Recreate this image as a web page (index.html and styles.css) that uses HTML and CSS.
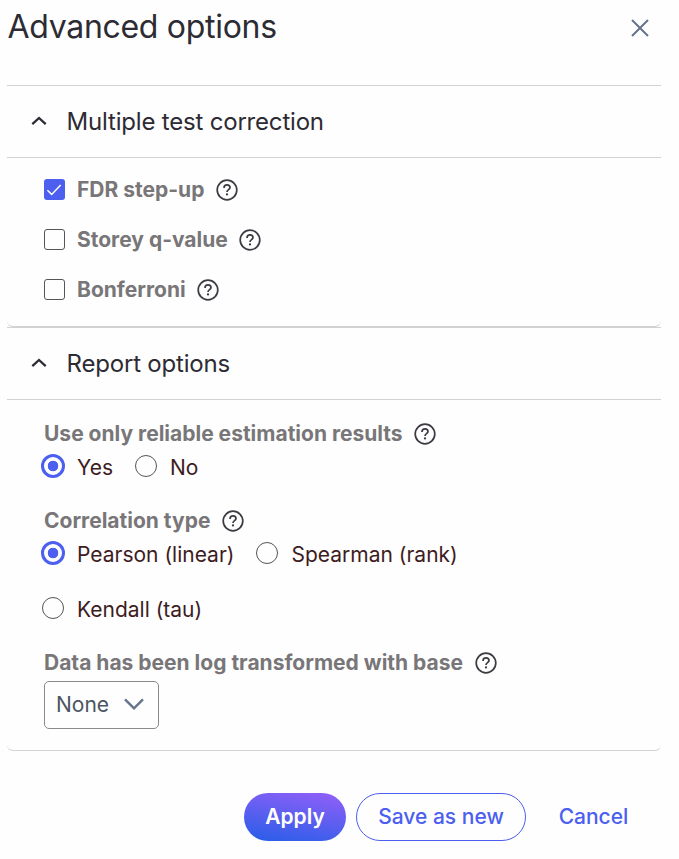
FILE: index.html
```html
<!DOCTYPE html>
<html lang="en">
<head>
  <meta charset="UTF-8" />
  <meta name="viewport" content="width=device-width, initial-scale=1.0" />
  <title>Advanced options</title>
  <link rel="stylesheet" href="styles.css">
</head>
<body>

<!-- shared icons -->
<svg class="sprite" xmlns="http://www.w3.org/2000/svg">
  <symbol id="help" viewBox="0 0 22 22">
    <circle cx="11" cy="11" r="9.8" stroke-width="1.7" />
    <path d="M8 8.9C8 7 9.3 5.9 11 5.9s3 1.1 3 2.7c0 2-3 2.1-3 4.3" stroke-width="1.7" />
    <circle cx="11" cy="15.4" r="1.15" fill="currentColor" stroke="none" />
  </symbol>
  <symbol id="chevron-up" viewBox="0 0 16 10">
    <path d="M1.3 8.2L8 2l6.7 6.2" stroke-width="2.3" />
  </symbol>
</svg>

<div class="dialog">

  <div class="header">
    <h1>Advanced options</h1>
    <button class="btn-close" aria-label="Close">
      <svg viewBox="0 0 18 18"><path d="M1 1l16 16M17 1L1 17" /></svg>
    </button>
  </div>

  <!-- MULTIPLE TEST CORRECTION -->
  <div class="section">
    <div class="section-title">
      <svg class="chevron"><use href="#chevron-up" /></svg>
      <h2>Multiple test correction</h2>
    </div>
    <div class="section-body checks">
      <div class="check-row">
        <span class="checkbox checked"><svg viewBox="0 0 21 21"><path d="M3.4 11.3l4.3 4.1 9-9.3" /></svg></span>
        <span class="label">FDR step-up</span>
        <svg class="help"><use href="#help" /></svg>
      </div>
      <div class="check-row">
        <span class="checkbox"></span>
        <span class="label">Storey q-value</span>
        <svg class="help"><use href="#help" /></svg>
      </div>
      <div class="check-row">
        <span class="checkbox"></span>
        <span class="label">Bonferroni</span>
        <svg class="help"><use href="#help" /></svg>
      </div>
    </div>
  </div>

  <!-- REPORT OPTIONS -->
  <div class="section">
    <div class="section-title">
      <svg class="chevron"><use href="#chevron-up" /></svg>
      <h2>Report options</h2>
    </div>
    <div class="section-body report">
      <div class="field reliable">
        <div class="field-label">
          <span class="label">Use only reliable estimation results</span>
          <svg class="help"><use href="#help" /></svg>
        </div>
        <div class="radios">
          <div class="radio-item"><span class="radio selected"></span><span>Yes</span></div>
          <div class="radio-item"><span class="radio"></span><span>No</span></div>
        </div>
      </div>

      <div class="field correlation">
        <div class="field-label">
          <span class="label">Correlation type</span>
          <svg class="help"><use href="#help" /></svg>
        </div>
        <div class="radios">
          <div class="radio-item"><span class="radio selected"></span><span>Pearson (linear)</span></div>
          <div class="radio-item"><span class="radio"></span><span>Spearman (rank)</span></div>
          <div class="radio-item"><span class="radio"></span><span>Kendall (tau)</span></div>
        </div>
      </div>

      <div class="field">
        <div class="field-label">
          <span class="label">Data has been log transformed with base</span>
          <svg class="help"><use href="#help" /></svg>
        </div>
        <button class="select">
          <span>None</span>
          <svg viewBox="0 0 20 12"><path d="M1 1.3l9 9 9-9" /></svg>
        </button>
      </div>
    </div>
  </div>

  <div class="footer">
    <button class="btn btn-primary">Apply</button>
    <button class="btn btn-outline">Save as new</button>
    <button class="btn btn-text">Cancel</button>
  </div>

</div>
</body>
</html>
```

FILE: styles.css
```css
* { box-sizing: border-box; margin: 0; padding: 0; }
body {
  font-family: Inter, "Liberation Sans", sans-serif;
  background: #fefefe;
  color: #2d2b33;
  font-size: 21px;
}
svg { fill: none; stroke: currentColor; flex: none; display: block; }
button { font: inherit; background: none; border: none; cursor: pointer; }
.sprite { display: none; }
.dialog { width: 661px; padding-left: 7px; }

/* HEADER */
.header {
  display: flex;
  justify-content: space-between;
  height: 85px;
  padding: 7px 12px 0 .5px;
}
h1 { font-size: 32px; font-weight: 400; line-height: 40px; letter-spacing: -.3px; }
.btn-close { height: 42px; color: #64748b; }
.btn-close svg { width: 18px; height: 18px; stroke-width: 2; }

/* SECTIONS */
.section-title {
  display: flex;
  align-items: center;
  gap: 19.5px;
  height: 73px;
  padding-left: 24px;
  border-top: 1px solid #d2d2d2;
  border-bottom: 1px solid #d2d2d2;
}
.chevron { width: 16px; height: 10px; margin-bottom: 1px; }
h2 { font-size: 24px; font-weight: 400; line-height: 32px; letter-spacing: -.19px; }
.section-body {
  padding: 0 37px;
  border-bottom: 1px solid #d2d2d2;
  border-radius: 0 0 6px 6px;
}
.checks { height: 169px; padding-top: 6px; }
.report { height: 351px; padding-top: 17px; }

/* LABELS */
.label { font-weight: 700; color: #787678; }
.help { width: 22px; height: 22px; color: #3d3a42; margin: 1.5px 0 0 11.5px; }
.field-label { display: flex; align-items: center; height: 33px; padding-bottom: 1px; }

/* CHECKBOXES */
.check-row { display: flex; align-items: center; height: 50px; }
.checkbox {
  width: 21px;
  height: 21px;
  margin-right: 12px;
  border: 1px solid #555;
  border-radius: 3px;
}
.checkbox.checked { background: #4c5fef; border: none; color: #fff; }
.checkbox svg { stroke-width: 1.5; }

/* RADIOS */
.radios { display: flex; flex-wrap: wrap; margin: 0 40px 0 -3px; color: #3d1c22; }
.radio-item { display: flex; align-items: center; height: 35px; margin-right: 21px; }
.radio {
  width: 22px;
  height: 22px;
  margin: -3px 13px 0 1px;
  border: 1.5px solid #555;
  border-radius: 50%;
}
.radio.selected {
  width: 24px;
  height: 24px;
  margin: -3px 12px 0 0;
  border: 3px solid #4c5fef;
  background: radial-gradient(circle, #4c5fef 5px, transparent 5.6px);
}
.reliable { margin-bottom: 19px; }
.correlation .radios { row-gap: 20px; margin-bottom: 19px; }

/* SELECT */
.select {
  display: flex;
  align-items: center;
  justify-content: space-between;
  width: 115px;
  height: 48px;
  margin-top: 2px;
  padding: 0 14px 2px 11px;
  border: 1px solid #8a8a8a;
  border-radius: 5px;
  color: #4b5563;
}
.select svg { width: 20px; height: 12px; stroke-width: 2.4; color: #64748b; }

/* FOOTER */
.footer { display: flex; justify-content: flex-end; margin-top: 42px; }
.btn {
  height: 48px;
  padding-bottom: 2px;
  border-radius: 24px;
  font-size: 21px;
  font-weight: 500;
  color: #4c5fef;
}
.btn-primary {
  width: 102px;
  margin-right: 10px;
  background: linear-gradient(190deg, #8f5ff8 5%, #2b5ee8 95%);
  color: #fff;
  font-weight: 600;
}
.btn-outline { width: 170px; border: 1px solid #4c5fef; }
.btn-text { width: 135px; }
```
